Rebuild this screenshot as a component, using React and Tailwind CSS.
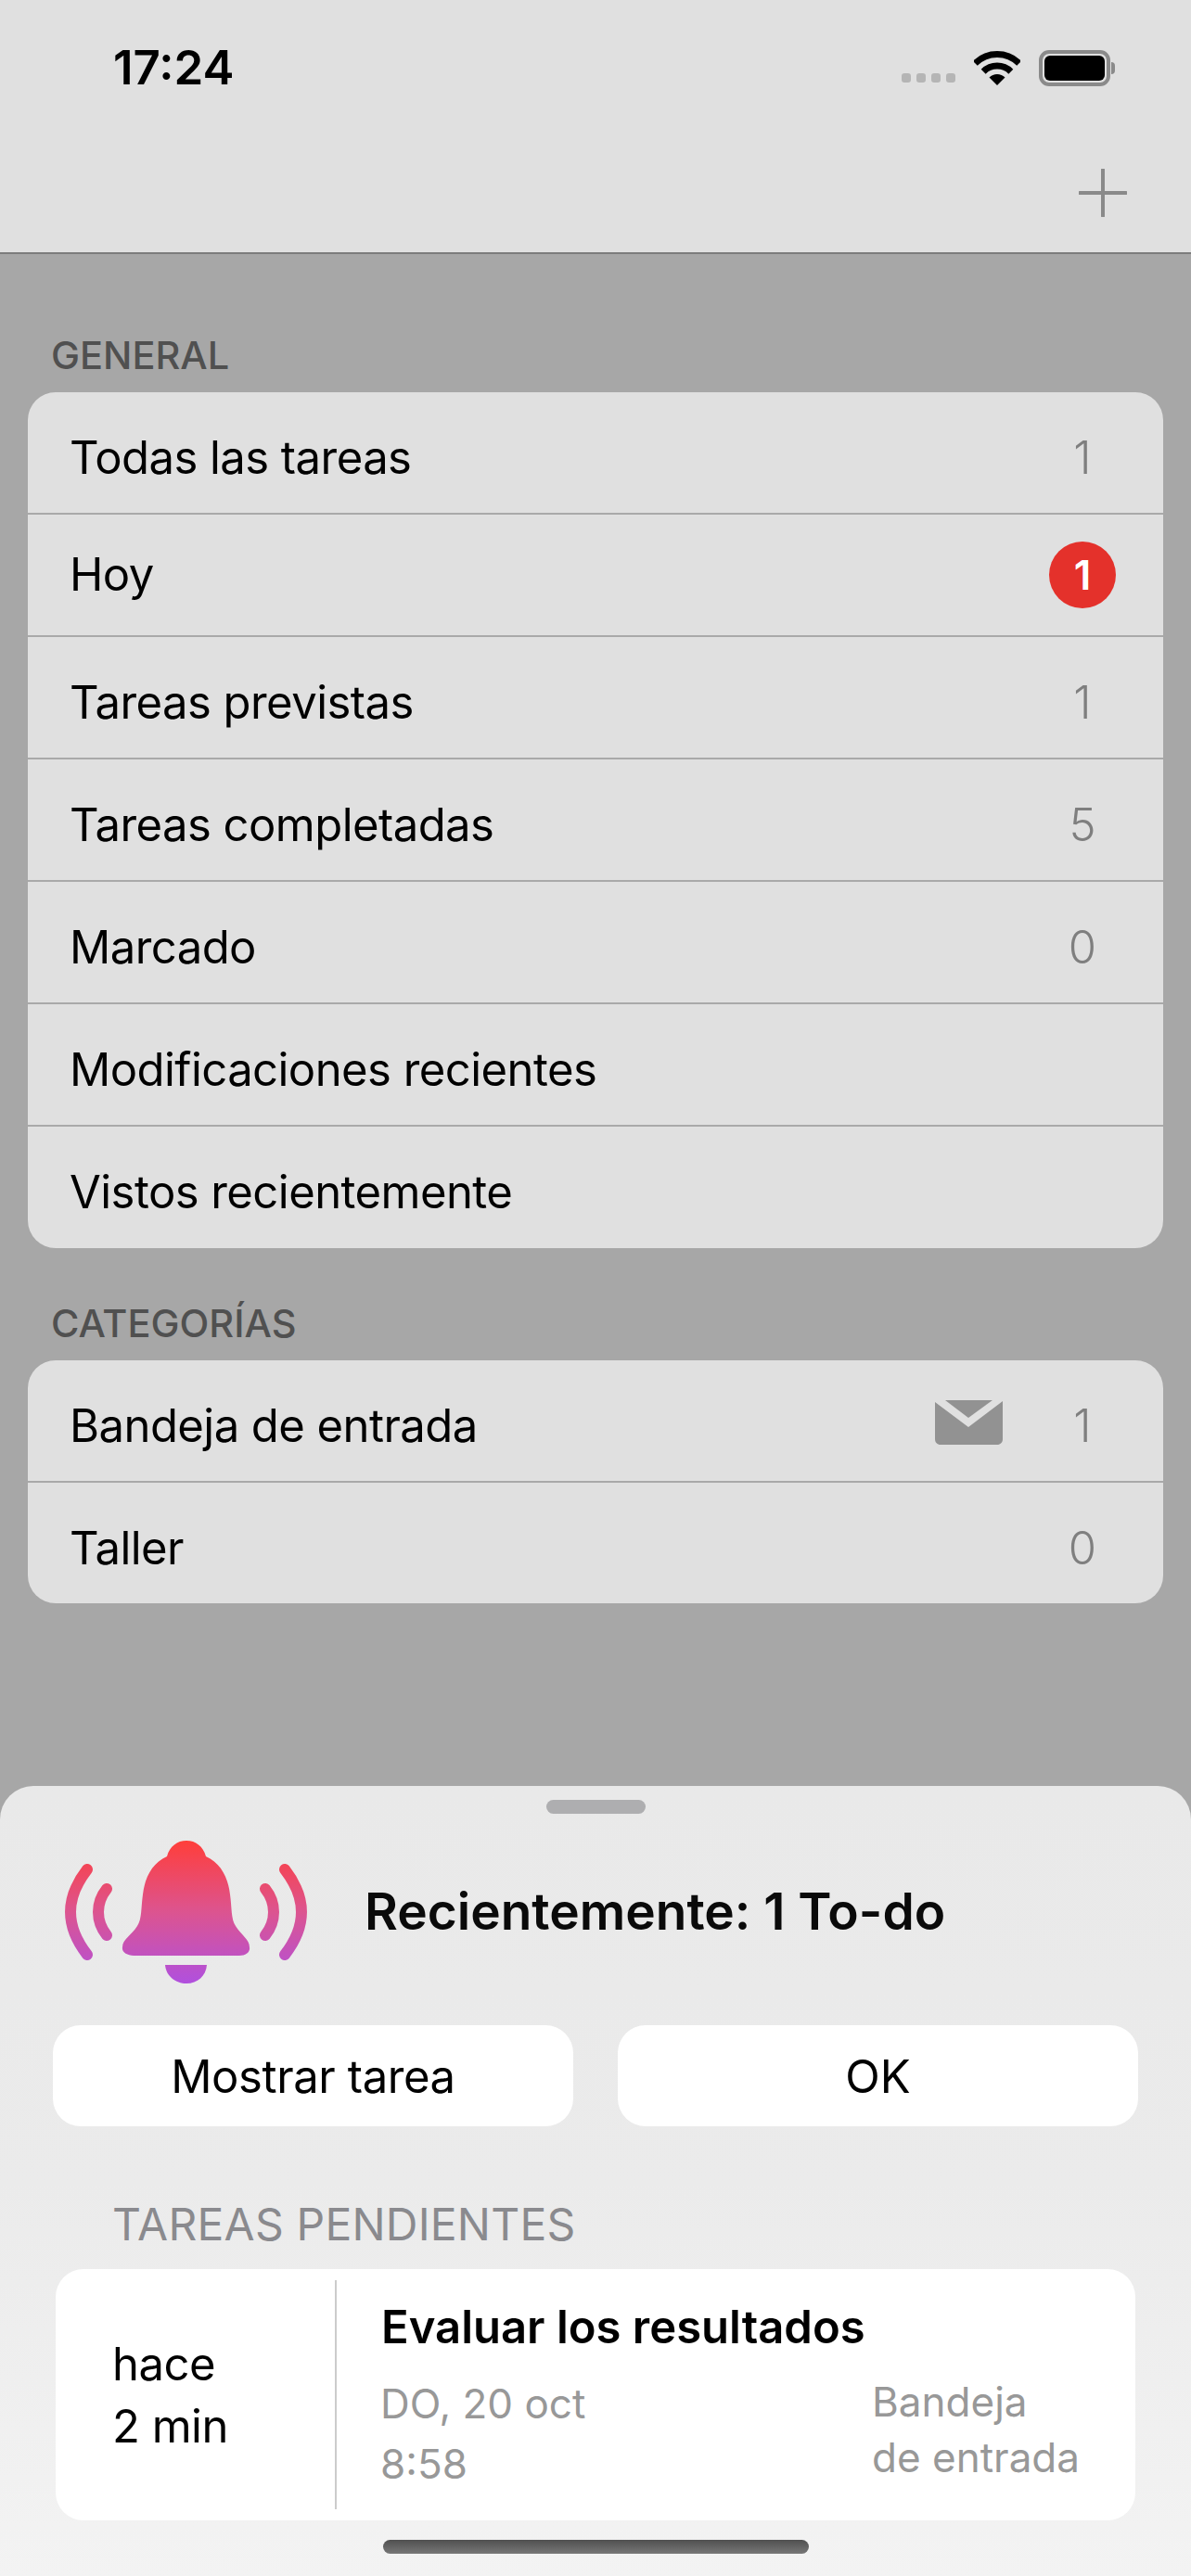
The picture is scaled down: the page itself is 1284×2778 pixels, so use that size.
const generalRows = [
  { label: 'Todas las tareas', count: '1', h: 'h-[132px]' },
  { label: 'Hoy', badge: '1' },
  { label: 'Tareas previstas', count: '1' },
  { label: 'Tareas completadas', count: '5' },
  { label: 'Marcado', count: '0' },
  { label: 'Modificaciones recientes' },
  { label: 'Vistos recientemente', last: true, h: 'h-[131px]' },
];

const categoryRows = [
  { label: 'Bandeja de entrada', count: '1', mail: true, h: 'h-[132px]' },
  { label: 'Taller', count: '0', last: true, h: 'h-[130px]' },
];

function Wifi() {
  return (
    <svg width="50" height="38" viewBox="0 0 50 38" fill="none" className="shrink-0">
      <path d="M1.3 14.3A33.5 33.5 0 0 1 48.7 14.3" stroke="#000" strokeWidth="7" />
      <path d="M10.2 23.2A21 21 0 0 1 39.8 23.2" stroke="#000" strokeWidth="7" />
      <path d="M25 38L16.5 29.5A12 12 0 0 1 33.5 29.5Z" fill="#000" />
    </svg>
  );
}

function Battery() {
  return (
    <div className="flex items-center">
      <div className="w-[77px] h-[39px] rounded-[11px] border-[4px] border-[#8a8a8a] p-[2px]">
        <div className="w-full h-full rounded-[6px] bg-black" />
      </div>
      <div className="w-[4px] h-[13px] rounded-r-full bg-[#8a8a8a] ml-[1px]" />
    </div>
  );
}

function Mail() {
  return (
    <svg width="73" height="48" viewBox="0 0 73 48" className="shrink-0">
      <path d="M0 2L36 29L73 1V42C73 45.5 70.5 48 67 48H6C2.5 48 0 45.5 0 42Z" fill="#929292" />
      <path d="M11 0H62L36 19Z" fill="#929292" />
    </svg>
  );
}

function Bell() {
  return (
    <svg width="261" height="154" viewBox="0 0 261 154" fill="none" className="shrink-0">
      <defs>
        <linearGradient id="bell" gradientUnits="userSpaceOnUse" x1="131" y1="0" x2="131" y2="154">
          <stop offset="0" stopColor="#ff3e3a" />
          <stop offset="0.5" stopColor="#dc5490" />
          <stop offset="1" stopColor="#b050de" />
        </linearGradient>
      </defs>
      <path
        d="M110 17C113 6 121 0 131 0C141 0 149 6 152 17C168 24 176 40 178 58C180 72 179 85 184 92C190 102 199 106 199 115C200 120 195 124 188 124L74 124C67 124 61 120 62 115C62 106 72 102 78 92C83 85 82 72 84 58C86 40 94 24 110 17Z"
        fill="url(#bell)"
      />
      <path d="M108 134H153C152 146 143 154 131 154C119 154 109 146 108 134Z" fill="url(#bell)" />
      <g stroke="url(#bell)" strokeWidth="12" strokeLinecap="round">
        <path d="M24 31C0 62 0 92 24 123" />
        <path d="M45 52C33 67 33 87 45 102" />
        <path d="M237 31C261 62 261 92 237 123" />
        <path d="M216 52C228 67 228 87 216 102" />
      </g>
    </svg>
  );
}

function Row({ row }) {
  return (
    <div
      className={`flex items-center pl-[45px] pr-[51px] ${row.h || 'h-[132px]'} ${
        row.last ? '' : 'border-b-[2px] border-[#a9a9a9]'
      }`}
    >
      <span className={`flex-1 text-[49px] tracking-[-0.55px] text-black ${row.badge ? '' : 'pt-[11px]'}`}>
        {row.label}
      </span>
      {row.mail && (
        <div className="mr-[50px] mt-[3px]">
          <Mail />
        </div>
      )}
      {row.count && (
        <span className="w-[72px] pt-[11px] text-center text-[49px] font-light text-[#7f7f7f]">{row.count}</span>
      )}
      {row.badge && (
        <span className="w-[72px] h-[72px] rounded-full bg-[#e4312b] flex items-center justify-center text-[44px] font-semibold text-white">
          {row.badge}
        </span>
      )}
    </div>
  );
}

function Section({ title, rows, className }) {
  return (
    <section className={className}>
      <h2 className="pl-[55px] h-[56px] pb-[24px] flex items-center text-[41.5px] font-medium text-[#505050] uppercase">
        {title}
      </h2>
      <div className="mx-[30px] rounded-[30px] bg-[#e0e0e0] overflow-hidden">
        {rows.map((row) => (
          <Row key={row.label} row={row} />
        ))}
      </div>
    </section>
  );
}

export default function App() {
  return (
    <div className="w-[1284px] h-[2778px] flex flex-col overflow-hidden bg-[#a7a7a7] font-['Inter',sans-serif]">
      <header className="h-[274px] shrink-0 bg-[#e0e0e0] border-b-[2px] border-[#7c7c7c]">
        <div className="flex items-center justify-between h-[146px] pl-[122px] pr-[82px]">
          <span className="text-[51px] font-semibold text-black">17:24</span>
          <div className="flex items-center">
            <div className="flex gap-[6px] mt-[22px] mr-[20px]">
              <span className="w-[10px] h-[10px] rounded-[3px] bg-[#b5b5b5]" />
              <span className="w-[10px] h-[10px] rounded-[3px] bg-[#b5b5b5]" />
              <span className="w-[10px] h-[10px] rounded-[3px] bg-[#b5b5b5]" />
              <span className="w-[10px] h-[10px] rounded-[3px] bg-[#b5b5b5]" />
            </div>
            <Wifi />
            <div className="ml-[20px]">
              <Battery />
            </div>
          </div>
        </div>
        <div className="flex justify-end pr-[69px] pt-[36px]">
          <svg width="52" height="52" viewBox="0 0 52 52" stroke="#8a8a8a" strokeLinecap="round">
            <path d="M26 1V51" strokeWidth="4" />
            <path d="M1 26H51" strokeWidth="4" />
          </svg>
        </div>
      </header>

      <Section title="General" rows={generalRows} className="pt-[93px]" />
      <Section title="Categorías" rows={categoryRows} className="pt-[65px]" />

      <div className="relative mt-[197px] flex-1 rounded-t-[36px] bg-gradient-to-b from-[#e9e9e9] via-[#ebebeb] via-50% to-[#f3f3f3]">
        <div className="flex justify-center pt-[15px]">
          <div className="w-[107px] h-[15px] rounded-full bg-[#aeaeb0]" />
        </div>

        <div className="flex items-center pl-[70px] pt-[29px]">
          <Bell />
          <h1 className="ml-[62px] mb-[2px] text-[55px] font-semibold text-[#0a0a0a] whitespace-nowrap">
            Recientemente: 1 To-do
          </h1>
        </div>

        <div className="flex gap-[48px] px-[57px] pt-[45px]">
          <button className="flex-1 h-[109px] pt-[2px] rounded-[30px] bg-white text-[49px] tracking-[-0.4px] text-black">
            Mostrar tarea
          </button>
          <button className="flex-1 h-[109px] pt-[2px] rounded-[30px] bg-white text-[49px] text-black">OK</button>
        </div>

        <div className="pl-[121px] pt-[76px] text-[48px] tracking-[0.2px] leading-[60px] text-[#8a8a8e] uppercase">
          Tareas pendientes
        </div>

        <div className="mx-[60px] mt-[18px] h-[271px] flex items-center rounded-[30px] bg-white">
          <div className="w-[301px] pl-[61px] text-[49px] tracking-[-0.5px] leading-[67px] text-black">
            <div>hace</div>
            <div>2 min</div>
          </div>
          <div className="w-[2px] h-[247px] bg-[#cccccc]" />
          <div className="flex-1 pl-[48px] pr-[60px] pt-[4px]">
            <div className="text-[49px] leading-[60px] font-semibold text-black">Evaluar los resultados</div>
            <div className="flex justify-between mt-[20px] text-[44px] text-[#989898]">
              <div className="leading-[65px] -ml-[1px]">
                <div>DO, 20 oct</div>
                <div>8:58</div>
              </div>
              <div className="leading-[60px] ml-[2px]">
                <div>Bandeja</div>
                <div>de entrada</div>
              </div>
            </div>
          </div>
        </div>

        <div className="absolute bottom-[24px] left-[413px] w-[459px] h-[15px] rounded-full bg-gradient-to-b from-[#505050] to-[#777777]" />
      </div>
    </div>
  );
}
